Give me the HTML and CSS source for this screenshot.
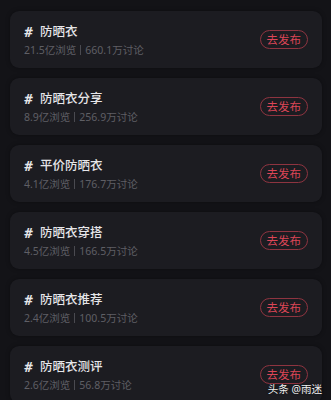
FILE: index.html
```html
<!DOCTYPE html>
<html lang="zh">
<head>
<meta charset="utf-8">
<link rel="stylesheet" href="styles.css">
</head>
<body>
<div class="list">
  <div class="card">
    <div class="info">
      <div class="title"><span class="hash">#</span>防晒衣</div>
      <div class="stats">21.5亿浏览<span class="sep"></span>660.1万讨论</div>
    </div>
    <div class="btn">去发布</div>
  </div>
  <div class="card">
    <div class="info">
      <div class="title"><span class="hash">#</span>防晒衣分享</div>
      <div class="stats">8.9亿浏览<span class="sep"></span>256.9万讨论</div>
    </div>
    <div class="btn">去发布</div>
  </div>
  <div class="card">
    <div class="info">
      <div class="title"><span class="hash">#</span>平价防晒衣</div>
      <div class="stats">4.1亿浏览<span class="sep"></span>176.7万讨论</div>
    </div>
    <div class="btn">去发布</div>
  </div>
  <div class="card">
    <div class="info">
      <div class="title"><span class="hash">#</span>防晒衣穿搭</div>
      <div class="stats">4.5亿浏览<span class="sep"></span>166.5万讨论</div>
    </div>
    <div class="btn">去发布</div>
  </div>
  <div class="card">
    <div class="info">
      <div class="title"><span class="hash">#</span>防晒衣推荐</div>
      <div class="stats">2.4亿浏览<span class="sep"></span>100.5万讨论</div>
    </div>
    <div class="btn">去发布</div>
  </div>
  <div class="card">
    <div class="info">
      <div class="title"><span class="hash">#</span>防晒衣测评</div>
      <div class="stats">2.6亿浏览<span class="sep"></span>56.8万讨论</div>
    </div>
    <div class="btn">去发布</div>
  </div>
</div>
<div class="watermark">头条 @雨迷</div>
</body>
</html>
```
FILE: styles.css
```css
html, body {
  margin: 0;
  padding: 0;
  background: #131317;
  height: 100%;
  overflow: hidden;
}
body {
  position: relative;
  font-family: "Noto Sans", "Noto Sans CJK SC", sans-serif;
}
.list {
  display: flex;
  flex-direction: column;
  gap: 10px;
  padding: 11px 9px 0 10px;
}
.card {
  display: flex;
  align-items: center;
  justify-content: space-between;
  height: 57px;
  box-sizing: border-box;
  padding: 0 14px;
  background: #1c1c21;
  border-radius: 9px;
  box-shadow: 0 0 4px rgba(0,0,0,0.35);
}
.info {
  display: flex;
  flex-direction: column;
  gap: 2px;
  padding-top: 1px;
}
.title {
  color: #e6e6e9;
  font-size: 12.5px;
  font-weight: 500;
  line-height: 18px;
  display: flex;
  align-items: center;
}
.hash {
  font-weight: 700;
  font-size: 13.5px;
  width: 16px;
  font-style: italic;
}
.stats {
  color: #5f5f65;
  font-size: 10.5px;
  line-height: 15px;
  display: flex;
  align-items: center;
}
.sep {
  display: inline-block;
  width: 1px;
  height: 10px;
  background: #4a4a50;
  margin: 0 4px;
}
.btn {
  height: 19px;
  box-sizing: border-box;
  padding: 0 6px;
  border: 1px solid #8e3440;
  border-radius: 10px;
  color: #dc4657;
  font-size: 11.5px;
  line-height: 17px;
  display: flex;
  align-items: center;
}
.watermark {
  position: absolute;
  right: 9px;
  top: 384px;
  color: #f2f2f2;
  font-size: 10.5px;
  line-height: 10px;
  text-shadow: 0 0 2px rgba(0,0,0,0.6);
}
```
